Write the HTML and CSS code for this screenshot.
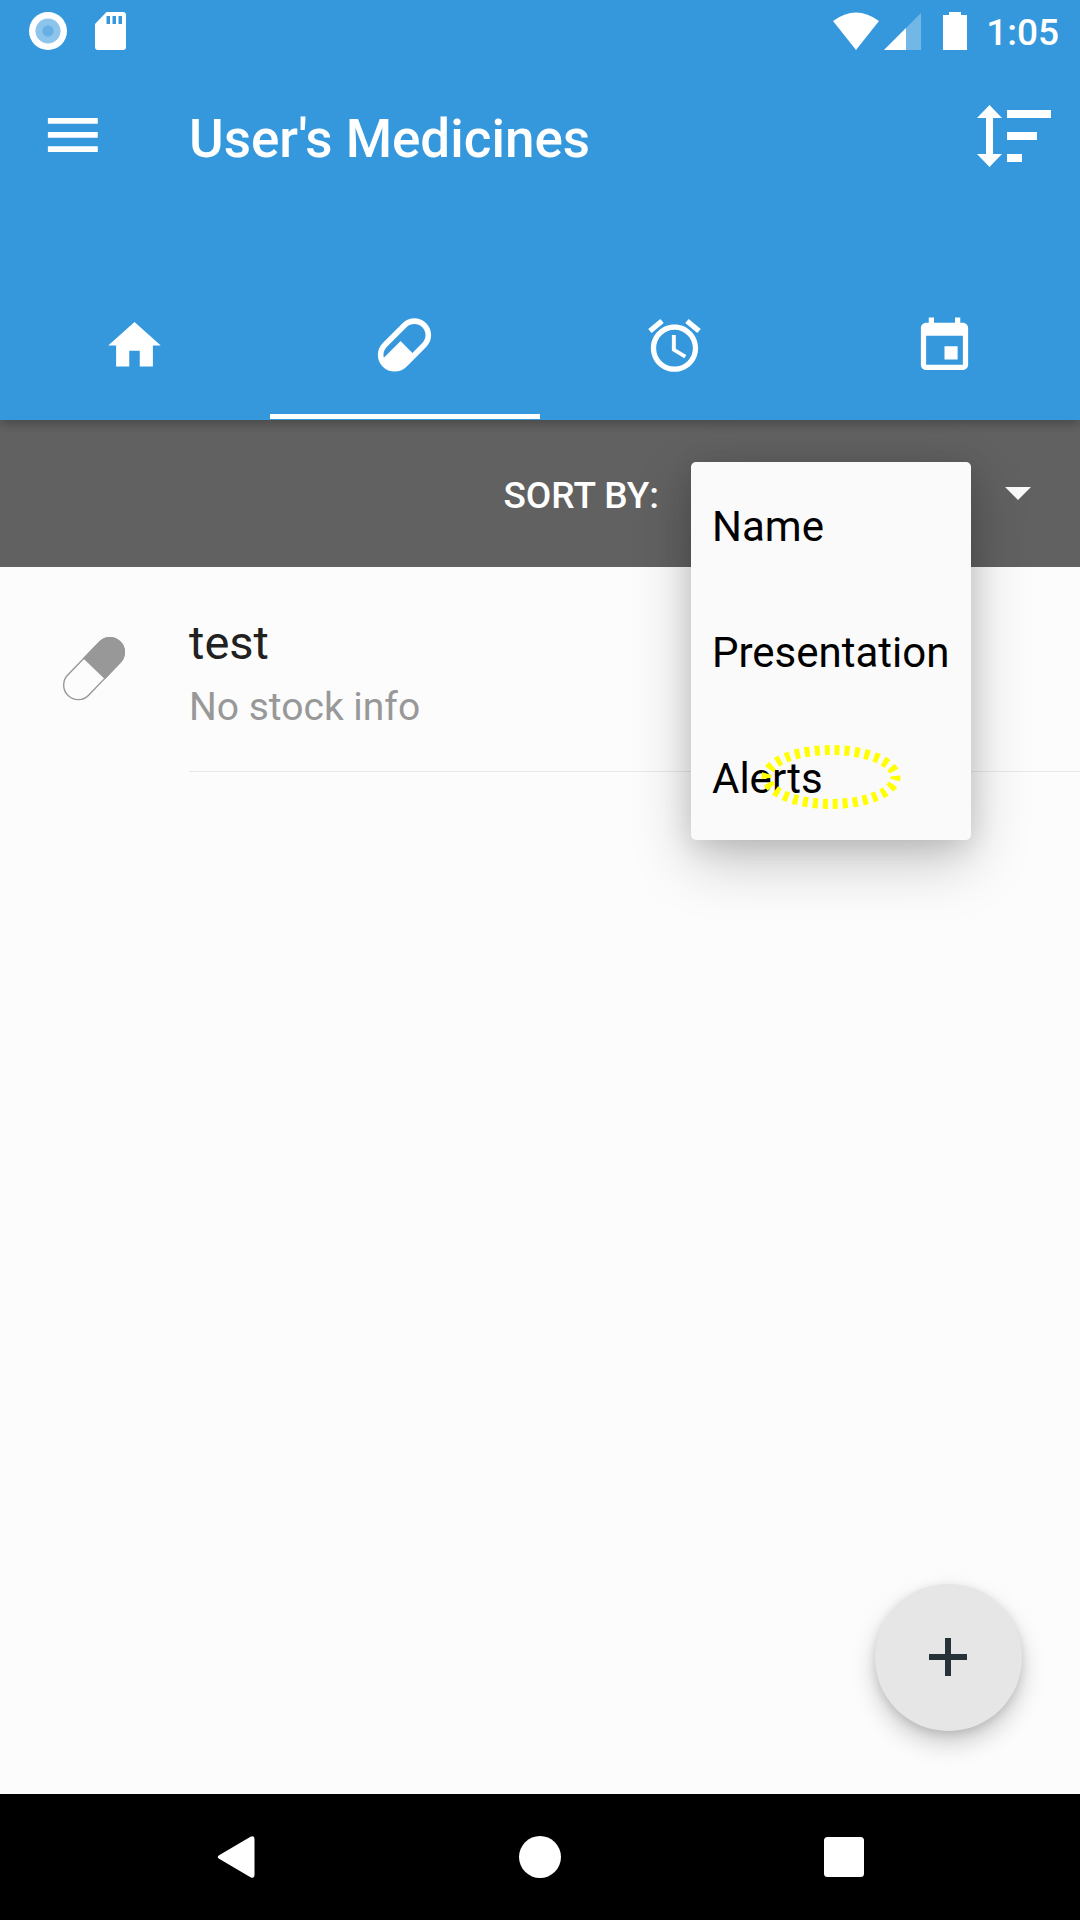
FILE: index.html
```html
<!DOCTYPE html>
<html lang="en">
<head>
<meta charset="utf-8">
<meta name="viewport" content="width=device-width, initial-scale=1">
<title>User's Medicines</title>
<link rel="stylesheet" href="styles.css">
</head>
<body>
<div class="screen">
  <header class="app-header">
    <div class="status-bar">
      <div class="status-group status-notices">
        <svg class="status-dot" viewBox="0 0 38 38" aria-hidden="true"><circle cx="19" cy="19" r="19" fill="#fff"/><circle cx="19" cy="19" r="12.5" fill="#8cc4eb"/><circle cx="19" cy="19" r="5.7" fill="#67b0e4"/></svg>
        <svg class="status-card" viewBox="0 0 31 38" aria-hidden="true"><path fill="#fff" fill-rule="evenodd" d="M11.500 0H28a3 3 0 0 1 3 3V35a3 3 0 0 1-3 3H3a3 3 0 0 1-3-3V12ZM11.500 4V12H15V4ZM17.500 4V12H21V4ZM23.500 4V12H27V4Z"/></svg>
      </div>
      <div class="status-group status-system">
        <div class="status-group status-icons">
          <svg class="status-wifi" viewBox="0 0 88 38" aria-hidden="true"><path fill="#fff" d="M0 9Q23-8 46 9L23 38Z"/><path fill="#fff" fill-opacity=".3" d="M88 1V38H51Z"/><path fill="#fff" d="M73 16V38H51Z"/></svg>
          <svg class="status-battery" viewBox="0 0 24 38" aria-hidden="true"><path fill="#fff" d="M6 0H18V3H24V38H0V3H6Z"/></svg>
        </div>
        <span class="clock">1:05</span>
      </div>
    </div>
    <div class="toolbar">
      <button class="icon-button" type="button" aria-label="Open menu">
        <svg class="icon" viewBox="0 0 24 24" aria-hidden="true"><path d="M3 18.300h19v-2.200H3v2.200zm0-5.400h19v-2.200H3v2.200zM3 5.300v2.200h19V5.300H3z"/></svg>
      </button>
      <h1 class="title">User's Medicines</h1>
      <button class="icon-button" type="button" aria-label="Sort medicines">
        <svg class="icon-sort" viewBox="0 0 74 62" aria-hidden="true"><path d="M12.500 0 25 13H16V49H25L12.500 62 0 49H9V13H0ZM30 5H74V13H30ZM30 27H60V35H30ZM30 49H45V57H30Z"/></svg>
      </button>
    </div>
    <nav class="tabs" aria-label="Sections">
      <a class="tab" href="#home" aria-label="Home"><svg class="icon" viewBox="0 0 24 24" aria-hidden="true"><path d="M10 20v-6h4v6h5v-8h3L12 3 2 12h3v8z"/></svg></a>
      <a class="tab tab-active" href="#medicines" aria-label="Medicines" aria-current="page"><svg class="icon" viewBox="0.72 0.9 22.56 22.56" aria-hidden="true"><path d="M4.220,11.290L11.290,4.220C13.640,1.880 17.430,1.880 19.780,4.220C22.120,6.560 22.120,10.360 19.780,12.710L12.710,19.780C10.360,22.120 6.560,22.120 4.220,19.780C1.880,17.430 1.880,13.640 4.220,11.290M5.640,12.710C4.590,13.750 4.240,15.240 4.600,16.570L10.590,10.590L14.830,14.830L18.360,11.290C19.930,9.730 19.930,7.200 18.360,5.640C16.800,4.070 14.270,4.070 12.710,5.640L5.640,12.710Z"/></svg></a>
      <a class="tab" href="#alarms" aria-label="Alarms"><svg class="icon" viewBox="0 0 24 24" aria-hidden="true"><path d="M22 5.720l-4.600-3.860-1.290 1.530 4.600 3.860L22 5.720zM7.880 3.390L6.600 1.860 2 5.710l1.290 1.530 4.590-3.850zM12.500 8H11v6l4.750 2.850.75-1.230-4-2.370V8zM12 4c-4.970 0-9 4.030-9 9s4.020 9 9 9c4.970 0 9-4.030 9-9s-4.030-9-9-9zm0 16c-3.870 0-7-3.130-7-7s3.130-7 7-7 7 3.130 7 7-3.130 7-7 7z"/></svg></a>
      <a class="tab" href="#calendar" aria-label="Calendar"><svg class="icon" viewBox="0 -0.3 24 24" aria-hidden="true"><path d="M17 12h-5v5h5v-5zM16 1v2H8V1H6v2H5c-1.110 0-1.990.9-1.990 2L3 19c0 1.100.89 2 2 2h14c1.100 0 2-.9 2-2V5c0-1.100-.9-2-2-2h-1V1h-2zm3 18H5V8h14v11z"/></svg></a>
    </nav>
  </header>

  <div class="sort-bar">
    <label class="sort-label" for="sort">SORT BY:</label>
    <div class="sort-field">
      <select class="sort-select" id="sort">
        <option>Name</option>
        <option>Presentation</option>
        <option>Alerts</option>
      </select>
      <svg class="sort-arrow" viewBox="0 0 26 13" aria-hidden="true"><path fill="#fafafa" d="M0 0H26L13 13Z"/></svg>
      <div class="sort-menu">
        <button class="sort-option" type="button">Name</button>
        <button class="sort-option" type="button">Presentation</button>
        <button class="sort-option" type="button">Alerts</button>
        <svg class="highlight" viewBox="0 0 140 64" aria-hidden="true"><ellipse cx="70" cy="32" rx="64.5" ry="27" fill="none" stroke="#ff0" stroke-width="10" stroke-dasharray="5 5" stroke-dashoffset="2"/></svg>
      </div>
    </div>
  </div>

  <main class="content">
    <ul class="medicine-list">
      <li class="medicine">
        <svg class="medicine-icon" viewBox="0 0 63 64" aria-hidden="true"><g transform="translate(31 31.700) rotate(-46)"><rect x="-37.300" y="-14.500" width="74.600" height="29" rx="14.500" fill="none" stroke="#989898" stroke-width="1.400"/><path fill="#989898" d="M0-15.200H22.800A15.200 15.200 0 0 1 22.800 15.200H0Z"/></g></svg>
        <div class="medicine-text">
          <h2 class="medicine-name">test</h2>
          <p class="medicine-stock">No stock info</p>
        </div>
      </li>
    </ul>
    <button class="fab" type="button" aria-label="Add medicine">
      <svg class="fab-icon" viewBox="0 0 38 38" aria-hidden="true"><path fill="#263238" d="M16 0H22V16H38V22H22V38H16V22H0V16H16Z"/></svg>
    </button>
  </main>

  <footer class="nav-bar">
    <button class="nav-button" type="button" aria-label="Back"><svg class="nav-icon" viewBox="0 0 42 42" aria-hidden="true"><path d="M4.500 19 35.500 .8Q39.500-1 39.500 3V39Q39.500 43 35.500 41.200L4.500 23Q.8 21 4.500 19Z"/></svg></button>
    <button class="nav-button" type="button" aria-label="Home"><svg class="nav-icon" viewBox="0 0 42 42" aria-hidden="true"><circle cx="21" cy="21" r="21"/></svg></button>
    <button class="nav-button" type="button" aria-label="Recent apps"><svg class="nav-icon" viewBox="0 0 42 42" aria-hidden="true"><rect x="1" y="1" width="40" height="40" rx="3.500"/></svg></button>
  </footer>
</div>
</body>
</html>
```
FILE: styles.css
```css
* {
  box-sizing: border-box;
}

body {
  margin: 0;
  background: #fcfcfc;
  color: #212121;
  font-family: Roboto, "Noto Sans", sans-serif;
}

button,
select {
  margin: 0;
  padding: 0;
  border: 0;
  background: none;
  font: inherit;
}

svg {
  display: block;
  flex: none;
}

.screen {
  display: flex;
  flex-direction: column;
  min-height: 100vh;
}

/* Header */
.app-header {
  position: relative;
  z-index: 1;
  padding-bottom: 1px;
  background: #3598dc;
  color: #fff;
  fill: #fff;
  box-shadow: 0 3px 10px rgba(0, 0, 0, 0.28);
}

.status-bar {
  display: flex;
  align-items: center;
  justify-content: space-between;
  height: 62px;
  padding: 0 21px 0 29px;
}

.status-group {
  display: flex;
  align-items: center;
}

.status-notices {
  gap: 28px;
}

.status-icons {
  gap: 22px;
}

.status-system {
  gap: 19px;
}

.status-dot {
  width: 38px;
  height: 38px;
}

.status-card {
  width: 31px;
  height: 38px;
}

.status-wifi {
  width: 88px;
  height: 38px;
}

.status-battery {
  width: 24px;
  height: 38px;
}

.clock {
  padding-top: 4px;
  font-size: 37px;
  font-weight: 500;
  line-height: 40px;
}

.toolbar {
  display: flex;
  align-items: center;
  height: 147px;
  padding: 0 29px 0 40px;
}

.icon {
  width: 63px;
  height: 63px;
}

.icon-sort {
  width: 74px;
  height: 62px;
}

.title {
  flex: 1;
  margin: 0;
  padding: 6px 0 0 86px;
  font-size: 53px;
  font-weight: 500;
  line-height: 62px;
}

.tabs {
  display: grid;
  grid-template-columns: repeat(4, 1fr);
  padding-top: 62px;
}

.tab {
  display: flex;
  align-items: center;
  justify-content: center;
  height: 148px;
  padding-right: 2px;
  border-top: 5px solid transparent;
  border-bottom: 5px solid transparent;
}

.tab-active {
  border-bottom-color: #fff;
}

/* Sort bar */
.sort-bar {
  display: flex;
  align-items: center;
  justify-content: flex-end;
  gap: 32px;
  height: 147px;
  padding-right: 49px;
  background: #616161;
}

.sort-label {
  padding-top: 4px;
  color: #fff;
  font-size: 37px;
  font-weight: 500;
  line-height: 44px;
}

.sort-field {
  position: relative;
  display: flex;
  align-items: center;
}

.sort-select {
  width: 314px;
  height: 63px;
  padding-left: 21px;
  appearance: none;
  color: #fff;
  font-size: 42px;
}

.sort-arrow {
  width: 26px;
  height: 13px;
}

.sort-menu {
  position: absolute;
  top: 0;
  left: 0;
  z-index: 2;
  width: 280px;
  border-radius: 5px;
  background: #fafafa;
  box-shadow: 0 21px 60px rgba(0, 0, 0, 0.22), 0 6px 28px rgba(0, 0, 0, 0.12);
}

.sort-option {
  display: block;
  width: 100%;
  height: 126px;
  padding: 4px 21px 0;
  color: #000;
  font-size: 42px;
  line-height: 50px;
  text-align: left;
  white-space: nowrap;
}

.highlight {
  position: absolute;
  right: 70px;
  bottom: 31px;
  width: 140px;
  height: 64px;
}

/* Medicine list */
.content {
  position: relative;
  flex: 1;
}

.medicine-list {
  margin: 0;
  padding: 0;
  list-style: none;
}

.medicine {
  display: flex;
  align-items: flex-start;
  gap: 63px;
  padding-left: 63px;
}

.medicine-icon {
  width: 63px;
  height: 64px;
  margin-top: 70px;
}

.medicine-text {
  flex: 1;
  padding: 46px 0 36px;
  border-bottom: 1px solid #e8e8e8;
}

.medicine-name {
  margin: 0 0 6px;
  font-size: 47px;
  font-weight: 400;
  line-height: 60px;
}

.medicine-stock {
  margin: 0;
  color: #989898;
  font-size: 39px;
  line-height: 56px;
}

.fab {
  position: absolute;
  right: 58px;
  bottom: 63px;
  display: flex;
  align-items: center;
  justify-content: center;
  width: 147px;
  height: 147px;
  padding: 0 2px 2px 0;
  border-radius: 50%;
  background: #e6e6e6;
  box-shadow: 0 12px 24px rgba(0, 0, 0, 0.2), 0 3px 10px rgba(0, 0, 0, 0.12);
}

.fab-icon {
  width: 38px;
  height: 38px;
}

/* System navigation */
.nav-bar {
  display: grid;
  grid-template-columns: repeat(3, 1fr);
  height: 126px;
  padding: 0 84px;
  background: #000;
}

.nav-button {
  display: flex;
  align-items: center;
  justify-content: center;
}

.nav-icon {
  width: 42px;
  height: 42px;
  fill: #fff;
}
```
